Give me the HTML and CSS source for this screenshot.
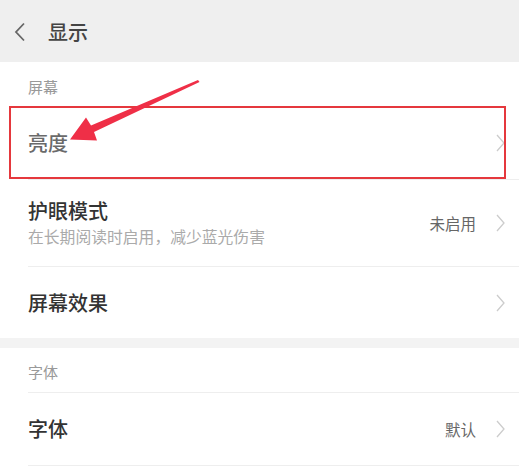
FILE: index.html
```html
<!DOCTYPE html>
<html lang="zh-CN">
<head>
    <meta charset="UTF-8">
    <meta name="viewport" content="width=device-width, initial-scale=1.0">
    <title>显示</title>
    <link rel="stylesheet" href="styles.css">
</head>
<body>
    <div class="header">
        <svg class="back" width="12" height="20" viewBox="0 0 12 20">
            <path d="M10 1.5 L2 10 L10 18.5" fill="none" stroke="#666" stroke-width="1.8"/>
        </svg>
        <h1 class="title">显示</h1>
    </div>

    <div class="section-label">屏幕</div>

    <div class="row highlight">
        <div class="row-text">
            <div class="row-title light">亮度</div>
        </div>
        <svg class="chevron" width="9" height="18" viewBox="0 0 9 18">
            <path d="M1 1 L8 9 L1 17" fill="none" stroke="#ccc" stroke-width="1.3"/>
        </svg>
    </div>

    <div class="row tall">
        <div class="row-text">
            <div class="row-title">护眼模式</div>
            <div class="row-sub">在长期阅读时启用，减少蓝光伤害</div>
        </div>
        <span class="row-value">未启用</span>
        <svg class="chevron" width="9" height="18" viewBox="0 0 9 18">
            <path d="M1 1 L8 9 L1 17" fill="none" stroke="#ccc" stroke-width="1.3"/>
        </svg>
    </div>

    <div class="row last">
        <div class="row-text">
            <div class="row-title">屏幕效果</div>
        </div>
        <svg class="chevron" width="9" height="18" viewBox="0 0 9 18">
            <path d="M1 1 L8 9 L1 17" fill="none" stroke="#ccc" stroke-width="1.3"/>
        </svg>
    </div>

    <div class="band"></div>

    <div class="section-label lined">字体</div>

    <div class="row">
        <div class="row-text">
            <div class="row-title">字体</div>
        </div>
        <span class="row-value">默认</span>
        <svg class="chevron" width="9" height="18" viewBox="0 0 9 18">
            <path d="M1 1 L8 9 L1 17" fill="none" stroke="#ccc" stroke-width="1.3"/>
        </svg>
    </div>

    <!-- flecha de anotación -->
    <svg class="arrow" width="519" height="470" viewBox="0 0 519 470">
        <polygon points="198,80 91,125.5 86,117.5 70,139.5 97,140.5 94,132 199.5,82" fill="#ef2f47"/>
    </svg>
</body>
</html>
```

FILE: styles.css
```css
body {
    margin: 0;
    font-family: "Noto Sans CJK SC", "Noto Sans", sans-serif;
    background-color: #fff;
    color: #333;
    width: 519px;
    height: 470px;
    overflow: hidden;
    position: relative;
}

/* Cabecera */
.header {
    height: 62px;
    background-color: #efefef;
    display: flex;
    align-items: center;
    padding-left: 14px;
    padding-top: 2px;
    box-sizing: border-box;
}

.back {
    display: block;
}

.title {
    margin: 0 0 0 22px;
    font-size: 20px;
    font-weight: 500;
    color: #444;
    line-height: 1;
}

/* Etiquetas de sección */
.section-label {
    height: 45px;
    display: flex;
    align-items: center;
    padding-left: 28px;
    padding-top: 3px;
    box-sizing: border-box;
    font-size: 15px;
    color: #999;
}

.section-label.lined {
    margin-left: 28px;
    padding-left: 0;
    padding-top: 2px;
    height: 45px;
    border-bottom: 1px solid #eee;
}

/* Filas */
.row {
    position: relative;
    height: 73px;
    margin-left: 28px;
    padding-right: 14px;
    display: flex;
    align-items: center;
    border-bottom: 1px solid #eee;
    box-sizing: border-box;
}

.row.tall {
    height: 87px;
}

.row.last {
    height: 71px;
    border-bottom: none;
}

.row-text {
    flex: 1;
}

.row-title {
    font-size: 20px;
    font-weight: 500;
    line-height: 1.2;
    color: #333;
}

.row-title.light {
    color: #6a6a6a;
}

.row-sub {
    font-size: 15.8px;
    color: #aaa;
    margin-top: 5px;
    line-height: 1.2;
}

.row-value {
    font-size: 15.5px;
    color: #666;
    margin-right: 20px;
}

.chevron {
    display: block;
}

/* Recuadro rojo */
.row.highlight::after {
    content: "";
    position: absolute;
    left: -19px;
    right: 13px;
    top: -1px;
    bottom: 0;
    border: 2px solid #e5383d;
}

.band {
    height: 10px;
    background-color: #f3f3f3;
}

.arrow {
    position: absolute;
    top: 0;
    left: 0;
    pointer-events: none;
}
```
